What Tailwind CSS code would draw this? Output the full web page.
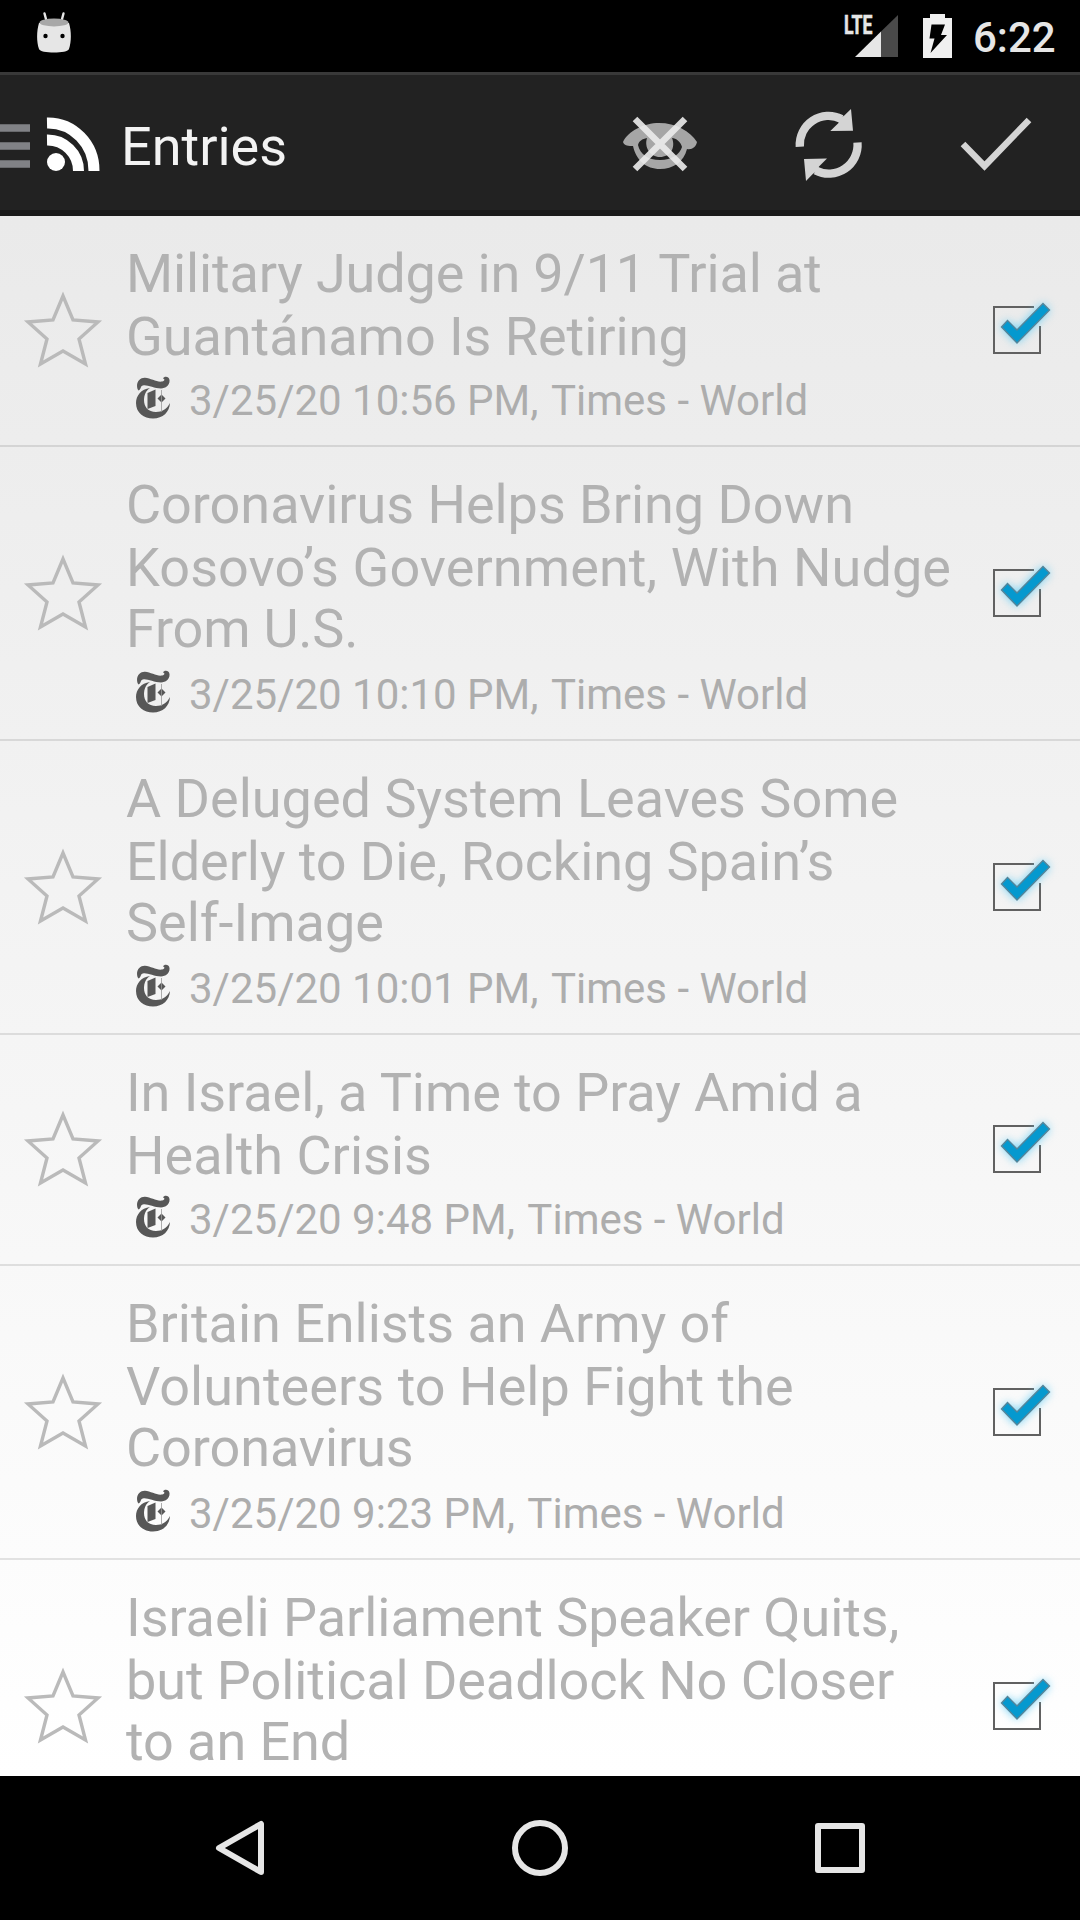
<!DOCTYPE html>
<html lang="en">
<head>
<meta charset="utf-8">
<title>Entries</title>
<script src="https://cdn.jsdelivr.net/npm/@tailwindcss/browser@4"></script>
</head>
<body class="w-[1080px] h-[1920px] overflow-hidden bg-black font-['Roboto',sans-serif]">
<svg class="hidden">
  <symbol id="star" viewBox="0 0 80 80"><path d="M40 6L50 30L75 32L56 49L62.500 74L40 61L17.500 74L24 49L5 32L30 30Z" fill="none" stroke="#bababa" stroke-width="3.400"/></symbol>
  <symbol id="check" viewBox="0 0 96 96">
    <path d="M52 25H12V71H58V44" fill="none" stroke="#616161" stroke-width="2"/>
    <path d="M19.500 45L25.500 38.500L35 48L61 21.500L67.500 28L35 61Z" fill="#62cdf5" filter="url(#glow)"/>
    <path d="M19.500 45L25.500 38.500L35 48L61 21.500L67.500 28L35 61Z" fill="#0599cf" stroke="#55859a" stroke-width="1.400"/>
  </symbol>
  <filter id="glow" x="-50%" y="-50%" width="200%" height="200%"><feGaussianBlur stdDeviation="5"/></filter>
  <symbol id="nyt" viewBox="0 0 36 44">
    <path d="M1.500 13C-.5 6 4 1.500 9 1.800C15 2.200 21 6.500 26 5.500C29 5 29 3 27 2.500C28 0 33 0 33.500 4C34 9 30 12.500 25 12.500C18 12.500 11 8.500 7 9.500C4 10.200 5.500 13 2.500 14.500Z" fill="#575757"/>
    <path d="M14 12C5 13 0 20 0 27C0 37 8 42.500 17 42.500C27 42.500 33.500 36 34 27C31 33 26 36 20 36C12 36 8 31 8 24C8 19 10 14.500 14 12Z" fill="#575757"/>
    <path d="M11.500 17L19.500 13.500V30L11.500 33Z" fill="#575757"/>
    <path d="M25.500 18.500L29.500 22.500L25.500 26.500L21.500 22.500Z" fill="#575757"/><path d="M25.500 14V36" stroke="#999" stroke-width=".8"/>
  </symbol>
</svg>
<div class="w-full h-full flex flex-col">
  <header class="h-[72px] shrink-0 flex bg-black">
    <svg class="w-[72px] h-[72px]" viewBox="0 0 72 72"><path d="M44.500 13.500L46.500 21M63.500 13.500L61.500 21" stroke="#e6e6e6" stroke-width="2.400" stroke-linecap="round"/><path d="M39 23C36.500 31 36.500 42 39 49C40 53.800 68 53.800 69 49C71.500 42 71.500 31 69 23Z" fill="#e6e6e6"/><ellipse cx="54" cy="22.500" rx="14.500" ry="3.900" fill="#a8a8a8"/><circle cx="45.500" cy="36" r="2.200"/><circle cx="62.500" cy="36" r="2.200"/></svg>
    <svg class="w-[150px] h-[72px] ml-[738px]" viewBox="810 0 150 72"><text x="844" y="33.500" font-family="Roboto" font-weight="700" font-size="26" textLength="28.500" lengthAdjust="spacingAndGlyphs" fill="#e6e6e6" stroke="#e6e6e6" stroke-width=".6">LTE</text><path d="M855 57L881 31.500V57Z" fill="#e6e6e6"/><path d="M881 31.500L898 15V57H881Z" fill="#4a4a4a"/><path d="M923 18H930V14H945V18H952V58H923Z" fill="#f0f0f0"/><path d="M931.500 24.500H945L941 35H947L930.500 53L934.500 38.500H929.500Z" fill="#000"/></svg>
    <div class="ml-[13px] mt-[13px] text-[42px] leading-[49px] font-medium text-[#e6e6e6] whitespace-nowrap">6:22</div>
  </header>
  <nav class="h-[144px] shrink-0 flex items-start bg-[#222222] border-t-3 border-t-[#393939] border-b-6 border-b-[#1a1a1a]">
    <svg class="w-[121px] h-[135px]" viewBox="0 75 121 135"><path d="M0 128H30M0 146H30M0 164H30" stroke="#818286" stroke-width="7.500"/><g fill="none" stroke="#fff" stroke-width="11"><path d="M47 123A46 47.500 0 0 1 94 171"/><path d="M47 140A31 31 0 0 1 78.500 171"/></g><circle cx="56" cy="162" r="9" fill="#fff"/></svg>
    <h1 class="mt-[40px] text-[54px] leading-[63px] text-[#f3f3f3]">Entries</h1>
    <svg class="w-[480px] h-[135px] ml-auto" viewBox="600 75 480 135">
      <path fill-rule="evenodd" fill="#a6a6a6" d="M623 142C628 131 644 123 659 123C676 123 690 131 697 142C696 147 692 150 687 149C684 162 673 169 660 169C646 169 636 160 633 146C629 146 624 146 623 142ZM638 145C640 154 648 160 660 160C672 160 680 154 682 147C681 142 676 138 672 138C676 148 670 157 660 157C650 157 644 147 647 138C642 139 639 141 638 145Z"/>
      <path d="M635 119L685 169M685 119L635 169" stroke="#ececec" stroke-width="6.500" stroke-opacity=".9"/>
      <g fill="#d4d4d4"><path d="M799.800 146.700A28.800 28.800 0 0 1 841.500 119" fill="none" stroke="#d4d4d4" stroke-width="8.300"/><path d="M851 109L853 130.700L830.300 131L838.500 123L840 118L844 115.700Z"/><path d="M857.500 142.500A28.800 28.800 0 0 1 815.700 170.500" fill="none" stroke="#d4d4d4" stroke-width="8.300"/><path d="M806 181L804 159L827 158.500L819 166.500L817 171L813 173.700Z"/></g>
      <path d="M963 144L984.500 166L1029 120" fill="none" stroke="#d4d4d4" stroke-width="6.500"/>
    </svg>
  </nav>
  <main id="list" class="h-[1560px] shrink-0 overflow-hidden bg-linear-to-b from-[#eaeaea] to-white"></main>
  <footer class="h-[144px] shrink-0 bg-black">
    <svg class="w-full h-full" viewBox="0 1776 1080 144" fill="none" stroke="#e6e6e6" stroke-width="6" stroke-linejoin="round"><path d="M261 1824V1872L219 1848Z"/><circle cx="540" cy="1848" r="25"/><rect x="818" y="1826" width="44" height="44"/></svg>
  </footer>
</div>
<script>
// Each title line is paired with its letter spacing in px.
const entries = [
  [[["Military Judge in 9/11 Trial at", -.15], ["Guantánamo Is Retiring", -.05]], "10:56"],
  [[["Coronavirus Helps Bring Down", -.04], ["Kosovo’s Government, With Nudge", .08], ["From U.S.", -.2]], "10:10"],
  [[["A Deluged System Leaves Some", 0], ["Elderly to Die, Rocking Spain’s", -.07], ["Self-Image", 0]], "10:01"],
  [[["In Israel, a Time to Pray Amid a", -.07], ["Health Crisis", 0]], "9:48"],
  [[["Britain Enlists an Army of", -.04], ["Volunteers to Help Fight the", .04], ["Coronavirus", -.08]], "9:23"],
  [[["Israeli Parliament Speaker Quits,", -.06], ["but Political Deadlock No Closer", -.07], ["to an End", -.08]], ""],
];
document.getElementById("list").innerHTML = entries.map(([lines, time]) => {
  const tall = lines.length === 3;
  return `
  <article class="flex items-start border-b-2 border-black/10 ${tall ? "h-[294px]" : "h-[231px]"}">
    <svg class="w-[80px] h-[80px] ml-[23px] shrink-0 ${tall ? "mt-[106px]" : "mt-[74px]"}"><use href="#star"/></svg>
    <div class="w-[850px] shrink-0 ml-[23px] pt-[26px] whitespace-nowrap">
      <h2 class="text-[54px] leading-[63px] text-[#b2b2b2]">${lines.map(([text, spacing], i) =>
        `<span class="block ${i === 2 ? "-mt-[2px] mb-[2px]" : ""}" style="letter-spacing:${spacing}px">${text}</span>`).join("")}</h2>
      ${time && `<div class="flex text-[#adadad]">
        <svg class="w-[36px] h-[44px] ml-[10px] mt-[8px] shrink-0"><use href="#nyt"/></svg>
        <p class="ml-[17px] mt-[8px] text-[42px] leading-[49px]">3/25/20 ${time} PM, <span class="ml-[2px]">Times - World</span></p>
      </div>`}
    </div>
    <svg class="w-[96px] h-[96px] ml-[6px] shrink-0 ${tall ? "mt-[98px]" : "mt-[66px]"}"><use href="#check"/></svg>
  </article>`;
}).join("");
</script>
</body>
</html>
